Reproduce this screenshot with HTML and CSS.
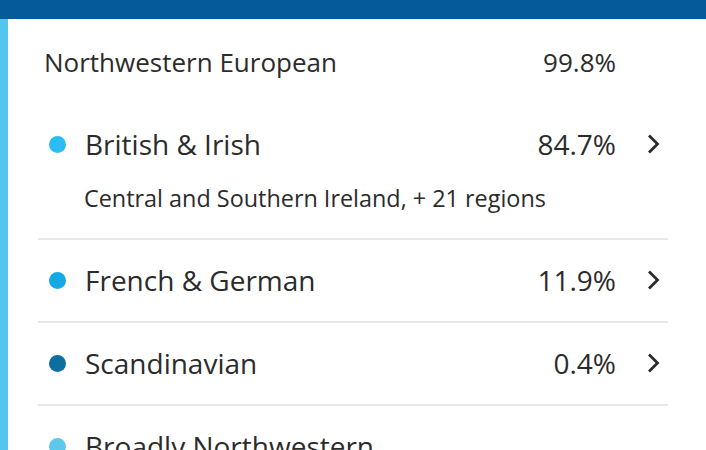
FILE: index.html
```html
<!DOCTYPE html>
<html lang="en">
<head>
    <meta charset="UTF-8">
    <meta name="viewport" content="width=device-width, initial-scale=1.0">
    <title>Ethnicity Estimate</title>
    <link rel="stylesheet" href="styles.css">
</head>
<body>
    <div class="topbar"></div>

    <div class="region-card">
        <div class="region-head">
            <span class="region-name">Northwestern European</span>
            <span class="region-pct">99.8%</span>
        </div>

        <ul class="sub-list">
            <li class="sub-item">
                <div class="sub-row">
                    <span class="dot dot-british"></span>
                    <span class="sub-name">British &amp; Irish</span>
                    <span class="sub-pct">84.7%</span>
                    <svg class="chevron" viewBox="0 0 14 20"><path d="M3 1.5l8.5 8.5-8.5 8.5"/></svg>
                </div>
                <div class="sub-detail">Central and Southern Ireland, + 21 regions</div>
            </li>
            <li class="sub-item">
                <div class="sub-row">
                    <span class="dot dot-french"></span>
                    <span class="sub-name">French &amp; German</span>
                    <span class="sub-pct">11.9%</span>
                    <svg class="chevron" viewBox="0 0 14 20"><path d="M3 1.5l8.5 8.5-8.5 8.5"/></svg>
                </div>
            </li>
            <li class="sub-item">
                <div class="sub-row">
                    <span class="dot dot-scand"></span>
                    <span class="sub-name">Scandinavian</span>
                    <span class="sub-pct">0.4%</span>
                    <svg class="chevron" viewBox="0 0 14 20"><path d="M3 1.5l8.5 8.5-8.5 8.5"/></svg>
                </div>
            </li>
            <li class="sub-item">
                <div class="sub-row">
                    <span class="dot dot-broad"></span>
                    <span class="sub-name">Broadly Northwestern</span>
                </div>
            </li>
        </ul>
    </div>
</body>
</html>
```

FILE: styles.css
```css
body {
    margin: 0;
    font-family: "Open Sans", "Noto Sans", sans-serif;
    color: #2b2b2b;
    background-color: #fff;
    overflow: hidden;
}
.topbar {
    height: 19px;
    background-color: #055a9a;
}
.region-card {
    border-left: 8px solid #52c6ec;
    padding: 0 38px 0 30px;
    height: 431px;
    overflow: hidden;
}
.region-head {
    display: flex;
    justify-content: space-between;
    align-items: center;
    padding: 0 52px 0 6px;
    height: 85px;
    font-size: 26px;
}
.sub-list {
    list-style: none;
    margin: 0;
    padding: 0;
}
.sub-item {
    border-bottom: 2px solid #e8e8e8;
    padding: 20px 0 21px;
}
.sub-row {
    display: flex;
    align-items: center;
    height: 40px;
    font-size: 28px;
}
.dot {
    width: 17px;
    height: 17px;
    border-radius: 50%;
    margin: 0 19px 0 11px;
    flex-shrink: 0;
}
.dot-british { background-color: #2cbcf4; }
.dot-french { background-color: #14a9e3; }
.dot-scand { background-color: #0c6f9e; }
.dot-broad { background-color: #5cc9ec; }
.sub-name {
    flex: 1;
}
.sub-pct {
    margin-right: 30px;
}
.chevron {
    width: 14px;
    height: 20px;
    margin-right: 8px;
    fill: none;
    stroke: #2b2b2b;
    stroke-width: 2.8;
}
.sub-detail {
    font-size: 23.4px;
    padding-left: 46px;
    margin: 18px 0 3px;
}
```
